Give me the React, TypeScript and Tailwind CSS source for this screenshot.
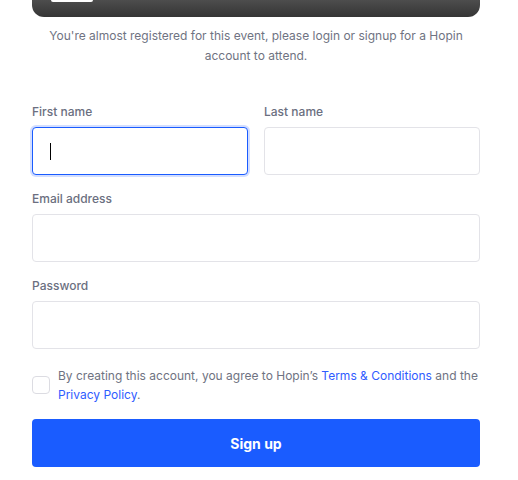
import React from "react";

export default function App() {
  const font = { fontFamily: "Inter, 'Liberation Sans', sans-serif" };
  return (
    <div className="w-[518px] h-[480px] bg-white overflow-hidden" style={font}>
      <div className="ml-8 w-[448px]">
        <div className="h-[17px] rounded-b-[12px] bg-gradient-to-b from-[#4d4d4d] to-[#353535] pl-[19px]">
          <div className="w-[42px] h-[2px] bg-white rounded-b-[2px]" />
        </div>
        <p className="mt-[9px] text-center text-[12px] leading-[19.5px] text-[#6f7382] px-4">
          You're almost registered for this event, please login or signup for a Hopin account to attend.
        </p>

        <div className="mt-[37px] grid grid-cols-2 gap-4">
          <div>
            <div className="text-[12px] leading-5 font-medium text-[#6b6f80]">First name</div>
            <div className="mt-[5px] h-12 rounded-[4px] border border-[#1a5cff] shadow-[0_0_0_2px_#d3deff] bg-white flex items-center pl-[17px]">
              <span className="w-px h-[17px] bg-black" />
            </div>
          </div>
          <div>
            <div className="text-[12px] leading-5 font-medium text-[#6b6f80]">Last name</div>
            <div className="mt-[5px] h-12 rounded-[4px] border border-[#e3e3e8] bg-white" />
          </div>
        </div>

        <div className="mt-[14px]">
          <div className="text-[12px] leading-5 font-medium text-[#6b6f80]">Email address</div>
          <div className="mt-[5px] h-12 rounded-[4px] border border-[#e3e3e8] bg-white" />
        </div>

        <div className="mt-[14px]">
          <div className="text-[12px] leading-5 font-medium text-[#6b6f80]">Password</div>
          <div className="mt-[5px] h-12 rounded-[4px] border border-[#e3e3e8] bg-white" />
        </div>

        <div className="mt-[17px] flex items-center gap-2">
          <div className="w-[18px] h-[18px] shrink-0 rounded-[4px] border border-[#dcdce2] bg-white" />
          <p className="text-[12px] leading-[19px] text-[#6f7382]">
            By creating this account, you agree to Hopin’s{" "}
            <span className="text-[#2f5cff]">Terms &amp; Conditions</span> and the{" "}
            <span className="text-[#2f5cff]">Privacy Policy</span>.
          </p>
        </div>

        <button className="mt-[15px] w-full h-12 rounded-[4px] bg-[#1a5cff] text-white text-[14px] font-bold">
          Sign up
        </button>
      </div>
    </div>
  );
}
